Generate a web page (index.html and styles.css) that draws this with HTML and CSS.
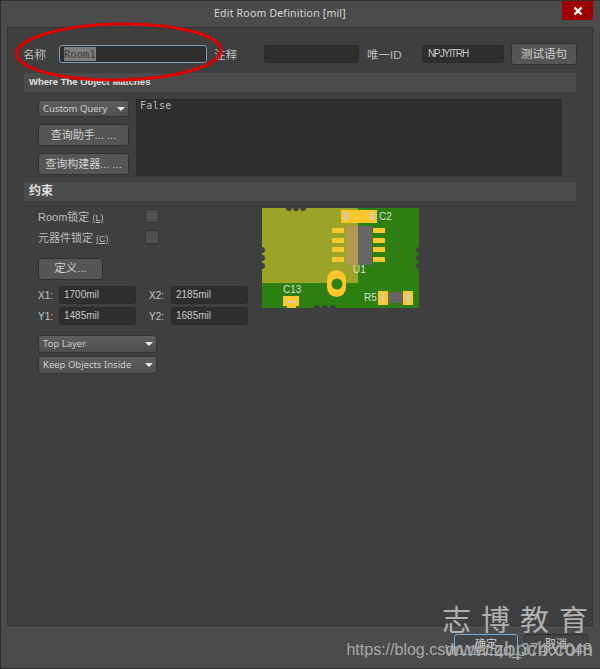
FILE: index.html
```html
<!DOCTYPE html>
<html lang="en">

<head>
    <title>Edit Room Definition [mil]</title>
    <meta charset="UTF-8">
    <link rel="stylesheet" href="styles.css">
</head>

<body>
    <div class="dialog">
        <div class="titlebar">
            <span class="title">Edit Room Definition [mil]</span>
            <a class="close">
                <svg width="10" height="10" viewBox="0 0 10 10"><path d="M1.5 1.5l7 7M8.5 1.5l-7 7" stroke="#fff" stroke-width="2.4"/></svg>
            </a>
        </div>
        <div class="panel">
            <div class="top-row">
                <label class="lbl name-lbl">名称</label>
                <div class="field name-field"><span class="selected">Room1</span></div>
                <label class="lbl note-lbl">注释</label>
                <div class="field note-field"></div>
                <label class="lbl id-lbl">唯一ID</label>
                <div class="field id-field">NPJYITRH</div>
                <a class="btn test-btn">测试语句</a>
            </div>

            <div class="section-head">Where The Object Matches</div>
            <div class="query-row">
                <div class="query-side">
                    <div class="combo">Custom Query<i class="arrow"></i></div>
                    <a class="btn side-btn">查询助手... ...</a>
                    <a class="btn side-btn">查询构建器... ...</a>
                </div>
                <div class="query-text">False</div>
            </div>

            <div class="section-head cjk-head">约束</div>
            <div class="constraint-row">
                <div class="constraint-side">
                    <div class="check-row"><span class="check-lbl">Room锁定 <u>(L)</u></span><i class="check"></i></div>
                    <div class="check-row"><span class="check-lbl">元器件锁定 <u>(C)</u></span><i class="check"></i></div>
                    <a class="btn define-btn">定义...</a>
                    <div class="coords">
                        <label>X1:</label><div class="field coord">1700mil</div>
                        <label>X2:</label><div class="field coord">2185mil</div>
                        <label>Y1:</label><div class="field coord">1485mil</div>
                        <label>Y2:</label><div class="field coord">1685mil</div>
                    </div>
                    <div class="combo wide">Top Layer<i class="arrow"></i></div>
                    <div class="combo wide">Keep Objects Inside<i class="arrow"></i></div>
                </div>
                <svg class="pcb" width="157" height="100" viewBox="0 0 157 100">
                    <rect width="157" height="100" fill="#2c7f10"/>
                    <rect width="96" height="75" fill="#9ca428"/>
                    <g fill="#3f3f3f">
                        <circle cx="27" cy="0" r="3"/><circle cx="34" cy="0" r="3"/><circle cx="41" cy="0" r="3"/>
                        <circle cx="0" cy="42" r="3"/><circle cx="0" cy="50" r="3"/><circle cx="0" cy="58" r="3"/>
                        <circle cx="157" cy="42" r="3"/><circle cx="157" cy="50" r="3"/><circle cx="157" cy="58" r="3"/>
                        <circle cx="55" cy="100" r="3"/><circle cx="63" cy="100" r="3"/><circle cx="71" cy="100" r="3"/>
                    </g>
                    <rect x="84" y="18" width="12" height="39" fill="#b29a52"/>
                    <rect x="96" y="18" width="14" height="39" fill="#666"/>
                    <g fill="#fcc72b">
                        <rect x="79" y="2" width="36" height="13"/>
                        <rect x="70" y="20" width="12" height="5"/><rect x="70" y="30" width="12" height="5"/><rect x="70" y="39" width="12" height="5"/><rect x="70" y="49" width="12" height="5"/>
                        <rect x="111" y="20" width="12" height="5"/><rect x="111" y="30" width="12" height="5"/><rect x="111" y="39" width="12" height="5"/><rect x="111" y="49" width="12" height="5"/>
                        <rect x="21" y="88" width="16" height="10"/><rect x="25" y="97" width="9" height="3"/>
                        <rect x="116" y="83" width="10" height="14"/><rect x="141" y="83" width="10" height="14"/>
                        <rect x="65" y="62" width="19" height="27" rx="9.500"/>
                    </g>
                    <rect x="83" y="4" width="3" height="8" fill="#ccc"/><rect x="109" y="4" width="3" height="8" fill="#ccc"/>
                    <rect x="25" y="93" width="8" height="2" fill="#ccc"/>
                    <rect x="120" y="85" width="2" height="10" fill="#ccc"/><rect x="145" y="85" width="3" height="10" fill="#ccc"/>
                    <rect x="126" y="84" width="15" height="11" fill="#666"/>
                    <circle cx="75" cy="76" r="5.500" fill="#2c7f10"/>
                    <g class="pcb-text">
                        <text x="117" y="12">C2</text>
                        <text x="91" y="65">U1</text>
                        <text x="21" y="85">C13</text>
                        <text x="102" y="93">R5</text>
                    </g>
                </svg>
            </div>
        </div>
        <div class="footer">
            <a class="btn foot-btn ok">确定</a>
            <a class="btn foot-btn">取消</a>
        </div>
    </div>

    <!-- annotation and watermarks on top of the shot -->
    <svg class="ring" width="600" height="669" viewBox="0 0 600 669"><ellipse cx="119" cy="52" rx="102" ry="28" transform="rotate(-1 119 52)" fill="none" stroke="#e00000" stroke-width="3"/></svg>
    <div class="mark-big">志博教育</div>
    <div class="mark-url">www.zbpcb.com</div>
    <div class="mark-blog">https://blog.csdn.net/qq_37467048</div>
</body>

</html>
```
FILE: styles.css
```css
* {
    box-sizing: border-box;
}

html, body {
    margin: 0;
    padding: 0;
}

body {
    width: 600px;
    height: 669px;
    position: relative;
    overflow: hidden;
    background: #2b2b2b;
    font-family: "Liberation Sans", "Noto Sans CJK SC", sans-serif;
    font-size: 11px;
    color: #c8c8c8;
}

.dialog {
    width: 600px;
    height: 669px;
    display: flex;
    flex-direction: column;
    background: #4b4b4b;
    border-top: 1px solid #333;
    border-left: 1px solid #2b2b2b;
    border-bottom: 1px solid #2b2b2b;
}

.titlebar {
    height: 26px;
    padding: 0 41px 2px 0;
    display: flex;
    justify-content: center;
    align-items: center;
    flex: none;
}

.title {
    font-family: "Noto Sans", sans-serif;
    font-size: 10.500px;
    color: #d8d8d8;
    letter-spacing: 0.2px;
}

.close {
    position: absolute;
    top: 1px;
    left: 562px;
    width: 31px;
    height: 19px;
    background: #a00000;
    display: flex;
    align-items: center;
    justify-content: center;
}

.panel {
    margin-left: 6px;
    width: 586px;
    height: 599px;
    flex: none;
    background: #3f3f3f;
    border: 1px solid #343434;
    padding: 16px 0 0 15px;
}

.top-row {
    display: flex;
    align-items: center;
    height: 20px;
    margin-bottom: 9px;
}

.lbl {
    font-size: 11.5px;
    color: #bdbdbd;
}

.name-lbl { width: 36px; }
.note-lbl { width: 50px; margin-left: 7px; }
.id-lbl { width: 55px; margin-left: 8px; }

.field {
    height: 18px;
    line-height: 16px;
    background: #2e2e2e;
    border: 1px solid #2a2a2a;
    border-radius: 3px;
    padding-left: 4px;
    color: #c8c8c8;
    font-size: 10px;
}

.name-field {
    width: 148px;
    border: 1px solid #7c9cb8;
}

.selected {
    background: #7d7d7d;
    color: #3a3a3a;
    font-family: "DejaVu Sans Mono", monospace;
    font-size: 10.500px;
    padding: 1px 0;
}

.note-field { width: 95px; }

.id-field {
    width: 82px;
    padding-left: 5px;
    letter-spacing: -1.1px;
}

.btn {
    display: block;
    text-align: center;
    background: #555;
    border: 1px solid #303030;
    border-radius: 3px;
    color: #d0d0d0;
}

.test-btn {
    width: 66px;
    height: 22px;
    line-height: 20px;
    margin-left: 7px;
    font-size: 11.5px;
}

.section-head {
    width: 552px;
    height: 19px;
    line-height: 18px;
    margin-left: 1px;
    padding-left: 5px;
    background: #4b4b4b;
    font-weight: bold;
    font-size: 9.500px;
    color: #e0e0e0;
}

.cjk-head {
    font-size: 12px;
}

.query-row {
    display: flex;
    padding: 7px 0 0 15px;
    height: 90px;
}

.query-side {
    width: 98px;
    padding-top: 1px;
    display: flex;
    flex-direction: column;
}

.combo {
    position: relative;
    height: 18px;
    line-height: 16px;
    background: linear-gradient(#5e5e5e, #4e4e4e);
    border: 1px solid #333;
    border-radius: 3px;
    padding-left: 4px;
    font-family: "Noto Sans", sans-serif;
    font-size: 9.500px;
    color: #cfcfcf;
}

.arrow {
    position: absolute;
    right: 3px;
    top: 6px;
    width: 0;
    height: 0;
    border-left: 4px solid transparent;
    border-right: 4px solid transparent;
    border-top: 4px solid #e8e8e8;
}

.side-btn {
    width: 91px;
    height: 22px;
    line-height: 20px;
    margin-top: 7px;
    font-size: 11px;
}

.query-side .combo {
    width: 91px;
    height: 17px;
    line-height: 15px;
}

.query-text {
    width: 426px;
    height: 77px;
    background: #2e2e2e;
    border: 1px solid #2a2a2a;
    padding: 0 3px;
    font-family: "DejaVu Sans Mono", monospace;
    font-size: 10px;
    letter-spacing: 0.300px;
    color: #bbb;
}

.constraint-row {
    display: flex;
    padding-left: 15px;
}

.constraint-side {
    width: 224px;
}

.check-row {
    height: 21px;
    display: flex;
    align-items: center;
}

.check-row:first-child { margin-top: 4px; }

.check-lbl {
    width: 107px;
    font-size: 11px;
    color: #bdbdbd;
}

.check-lbl u {
    font-size: 9px;
}

.check {
    width: 14px;
    height: 14px;
    background: #505050;
    border: 1px solid #333;
    border-radius: 3px;
}

.define-btn {
    width: 65px;
    height: 22px;
    line-height: 19px;
    margin-top: 11px;
    font-size: 11.5px;
}

.coords {
    display: grid;
    grid-template-columns: 21px 77px 35px 77px;
    row-gap: 3px;
    align-items: center;
    margin-top: 6px;
    font-size: 10px;
    color: #c8c8c8;
}

.coords label:nth-of-type(even) {
    padding-left: 13px;
}

.coord {
    height: 18px;
}

.wide {
    width: 119px;
    margin-bottom: 3px;
}

.coords + .wide { margin-top: 10px; }

.pcb {
    margin-top: 7px;
    display: block;
}

.pcb-text text {
    font-family: "Liberation Sans", sans-serif;
    font-size: 10px;
    fill: #dedede;
}

.footer {
    flex: 1;
    display: flex;
    justify-content: flex-end;
    gap: 6px;
    padding: 8px 12px 0 0;
}

.foot-btn {
    width: 64px;
    height: 21px;
    line-height: 19px;
    background: #444;
    font-size: 11px;
}

.ok {
    border-color: #6fa8dc;
}

.ring {
    position: absolute;
    top: 0;
    left: 0;
}

.mark-big {
    position: absolute;
    top: 603px;
    left: 442px;
    font-size: 29px;
    line-height: 36px;
    letter-spacing: 10px;
    color: #b0b0b0;
    white-space: nowrap;
}

.mark-url {
    position: absolute;
    top: 639px;
    right: 7px;
    font-size: 20.500px;
    line-height: 20px;
    color: #a8a8a8;
    white-space: nowrap;
}

.mark-blog {
    position: absolute;
    top: 641px;
    right: 8px;
    font-size: 16px;
    line-height: 18px;
    color: #aaa;
    white-space: nowrap;
}
```
